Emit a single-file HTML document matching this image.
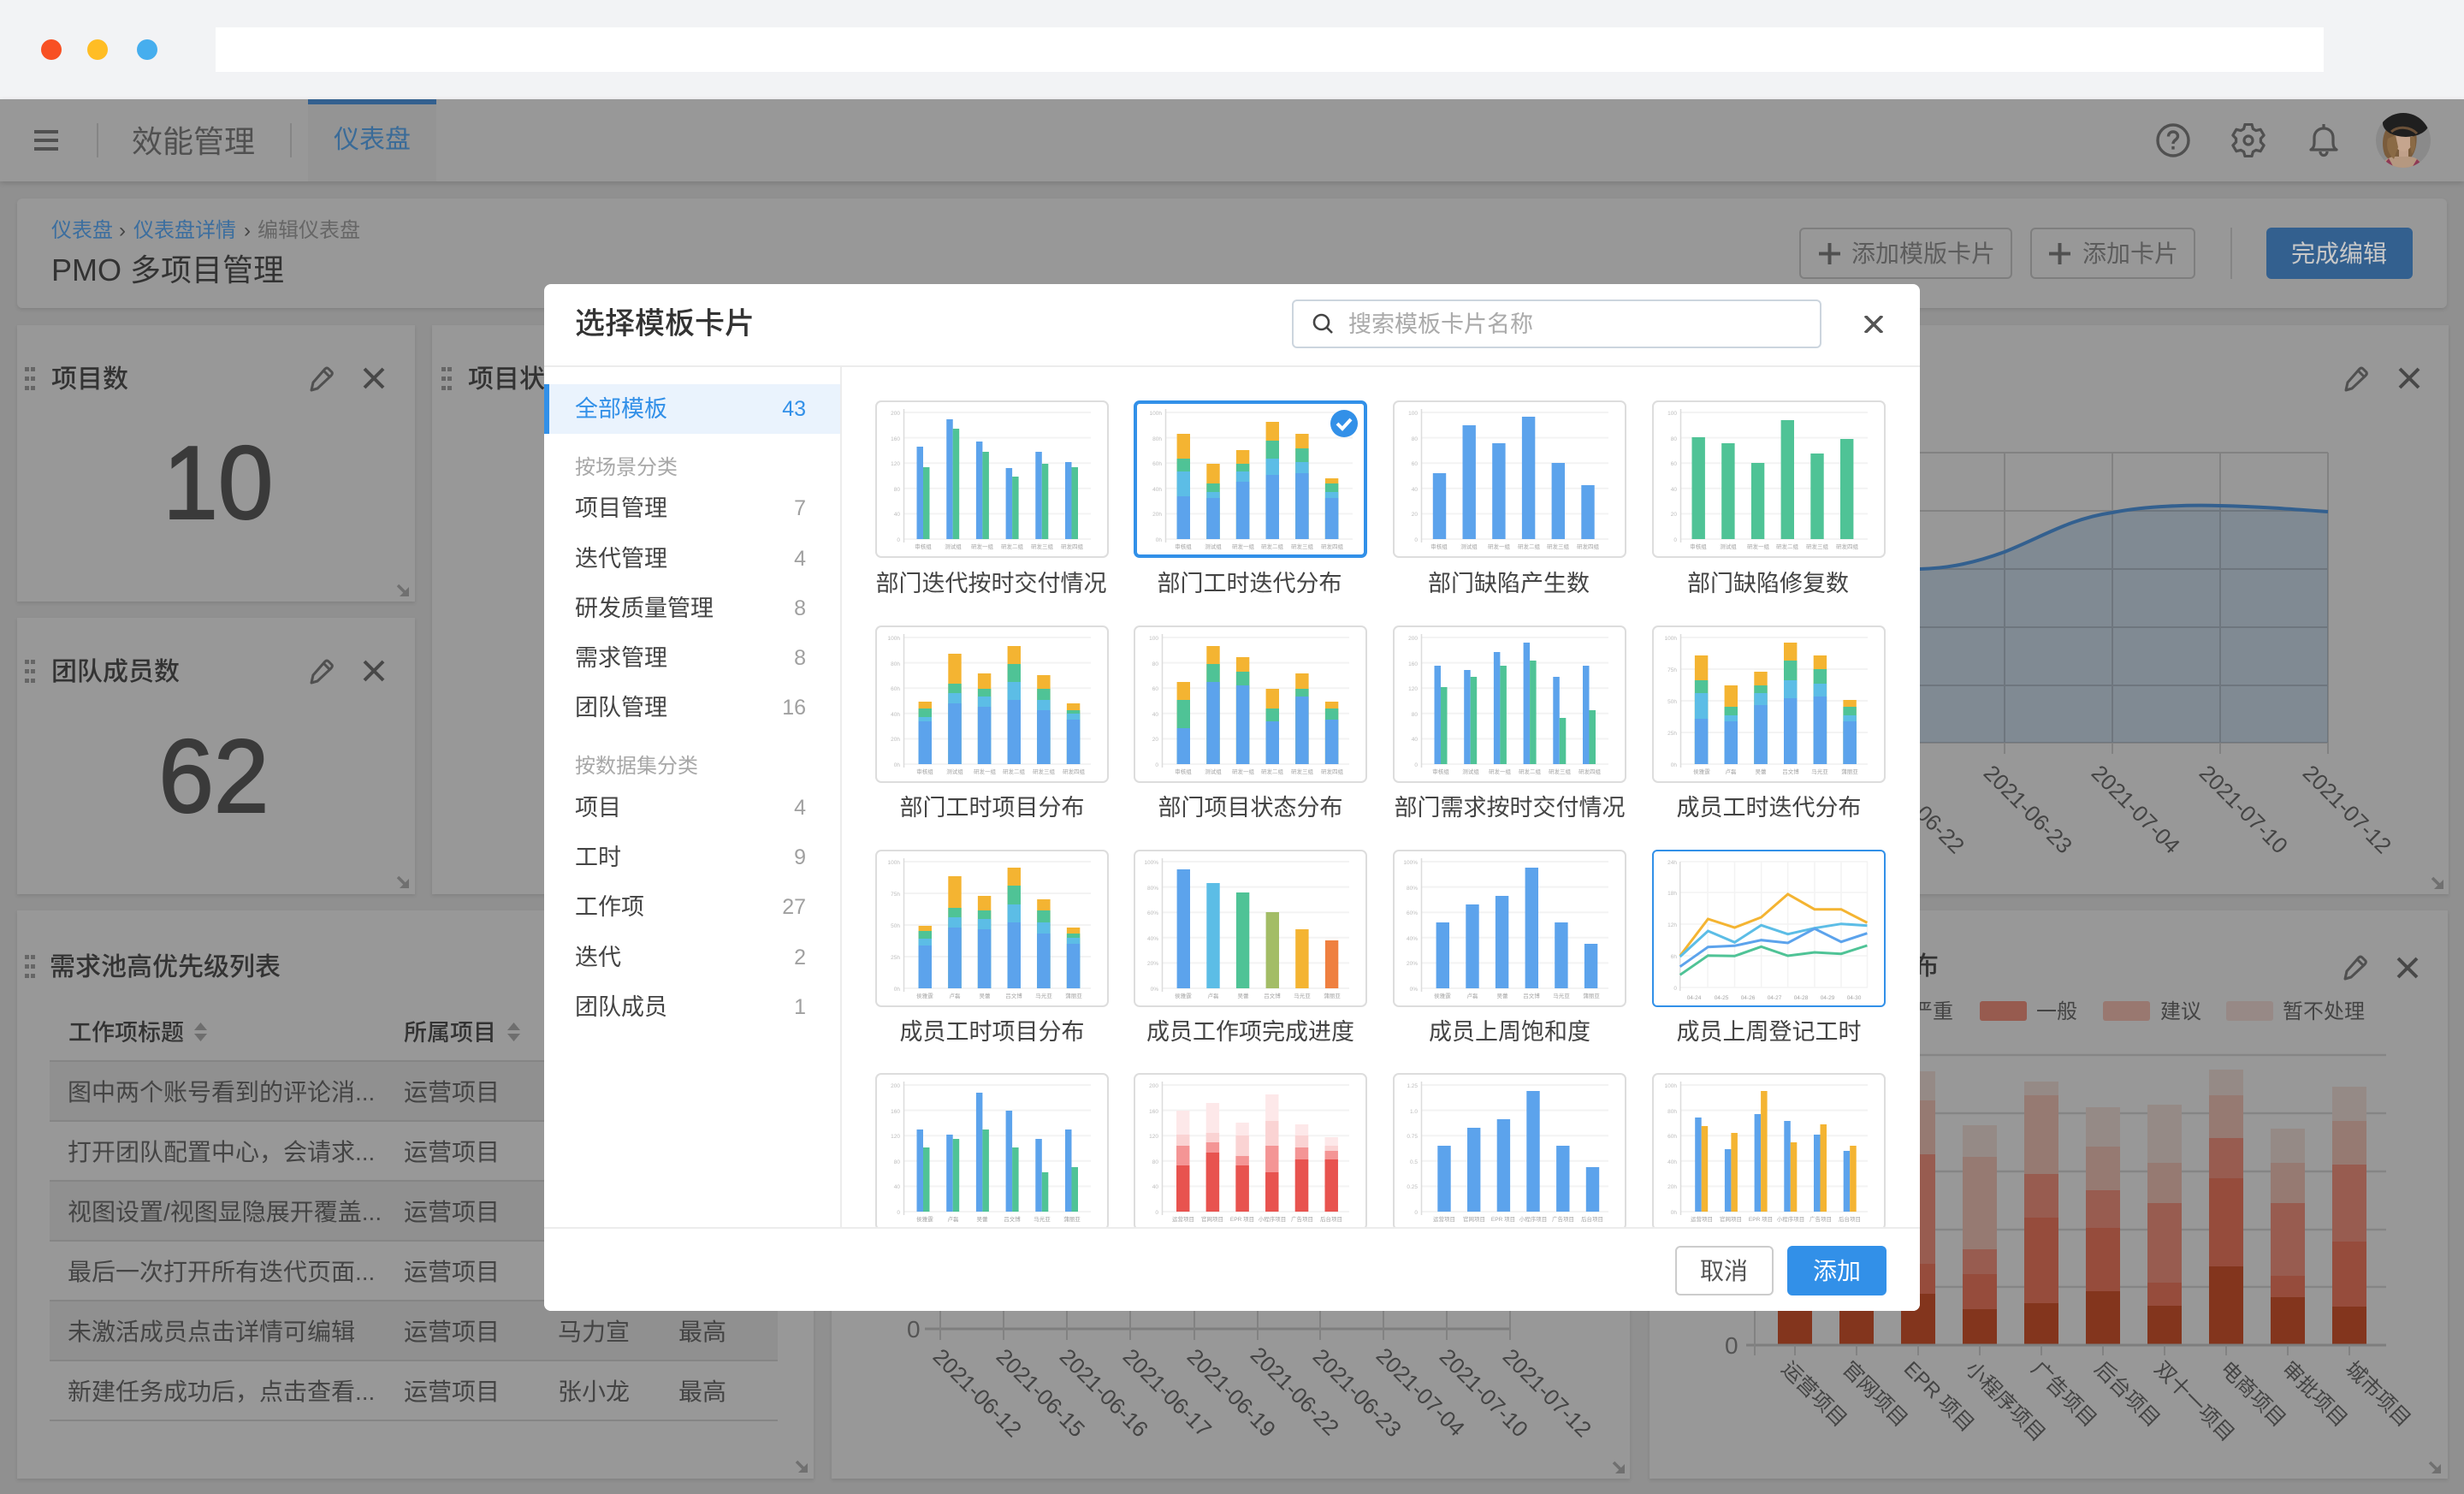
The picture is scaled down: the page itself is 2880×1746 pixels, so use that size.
<!DOCTYPE html>
<html lang="zh-CN">
<head>
<meta charset="utf-8">
<title>选择模板卡片</title>
<style>
html,body{margin:0;padding:0}
body{position:relative;width:2880px;height:1746px;overflow:hidden;background:#909090;font-family:"Liberation Sans","Noto Sans CJK SC",sans-serif}
.a{position:absolute}
.t{position:absolute;white-space:nowrap;line-height:1}
.card{position:absolute;background:#989898;box-shadow:0 2px 4px rgba(0,0,0,.1)}
.row{position:absolute;left:58px;width:851px;height:68px;border-bottom:2px solid #858585}
.tt{font-size:30px;color:#333;font-weight:500}
.td{font-size:28px;color:#444}
.th{font-size:27px;color:#333;font-weight:500}
.si{font-size:27px;color:#444;left:672px}
.sh{font-size:24px;color:#a8a8a8;left:672px}
.sc{font-size:25px;color:#a0a0a0;right:1938px}
.lb{font-size:27px;color:#444;text-align:center}
svg{display:block}
.c{position:absolute}
.c path{fill:none}
.s{stroke-width:15.4}
.p{stroke-width:7.5}
.o{stroke:#f4b430}.g{stroke:#4fc396}.l{stroke:#5bbde6}.b{stroke:#5ca3ec}
.xl text{font-size:6.5px;fill:#a4a4a4;text-anchor:middle}
.yl text{font-size:6.5px;fill:#bcbcbc;text-anchor:end}
.gl path{stroke:#f3f3f3;stroke-width:2}
.ax path{stroke:#dcdcdc;stroke-width:1.5}
</style>
</head>
<body>

<!-- browser chrome -->
<div class="a" style="left:0;top:0;width:2880px;height:116px;background:#f2f3f5"></div>
<div class="a" style="left:48px;top:46px;width:24px;height:24px;border-radius:50%;background:#f85023"></div>
<div class="a" style="left:102px;top:46px;width:24px;height:24px;border-radius:50%;background:#ffbd24"></div>
<div class="a" style="left:160px;top:46px;width:24px;height:24px;border-radius:50%;background:#46aeee"></div>
<div class="a" style="left:252px;top:32px;width:2464px;height:52px;background:#fff"></div>

<!-- top nav -->
<div class="a" style="left:0;top:116px;width:2880px;height:96px;background:#989898;box-shadow:0 2px 6px rgba(0,0,0,.15)"></div>
<div class="a" style="left:360px;top:116px;width:150px;height:96px;background:#949494"></div>
<div class="a" style="left:360px;top:116px;width:150px;height:6px;background:#33608f"></div>
<div class="a" style="left:40px;top:152px;width:28px;height:4px;background:#505050"></div>
<div class="a" style="left:40px;top:162px;width:28px;height:4px;background:#505050"></div>
<div class="a" style="left:40px;top:172px;width:28px;height:4px;background:#505050"></div>
<div class="a" style="left:113px;top:144px;width:2px;height:40px;background:#858585"></div>
<div class="a" style="left:339px;top:144px;width:2px;height:40px;background:#858585"></div>
<div class="t" style="left:154px;top:148px;font-size:36px;color:#505050">效能管理</div>
<div class="t" style="left:390px;top:149px;font-size:30px;color:#3a6b98">仪表盘</div>

<svg class="a" style="left:2520px;top:144px" width="40" height="40" viewBox="0 0 40 40" fill="none" stroke="#505050" stroke-width="3.4"><circle cx="20" cy="20" r="18"/><path d="M14.5 15.5c0-3.500 2.500-5.500 5.500-5.500s5.500 2 5.500 5c0 4.500-5.500 4.500-5.500 9"/><path d="M20 27v3.600"/></svg>
<svg class="a" style="left:2608px;top:144px" width="40" height="40" viewBox="0 0 40 40" fill="none" stroke="#505050" stroke-width="3.2" stroke-linejoin="round"><path d="M14.600 6.600L16 1.400H24L25.400 6.600L28.900 8.600L34.100 7.300L38.100 14.100L34.400 18V22L38.100 25.900L34.100 32.700L28.900 31.400L25.400 33.400L24 38.600H16L14.600 33.400L11.100 31.400L5.900 32.700L1.900 25.900L5.600 22V18L1.900 14.100L5.900 7.300L11.100 8.600Z"/><circle cx="20" cy="20" r="5"/></svg>
<svg class="a" style="left:2699px;top:144px" width="34" height="40" viewBox="0 0 34 40" fill="none" stroke="#505050" stroke-width="3.200" stroke-linejoin="round"><path d="M17 1v5"/><path d="M2 31c3-2 4-4 4-9v-5C6 10 11 6 17 6s11 4 11 11v5c0 5 1 7 4 9z"/><path d="M13 33c0 6 8 6 8 0"/></svg>
<svg class="a" style="left:2777px;top:132px" width="64" height="64" viewBox="0 0 64 64"><defs><clipPath id="av"><circle cx="32" cy="32" r="32"/></clipPath></defs><g clip-path="url(#av)"><rect width="64" height="64" fill="#8a8a8a"/><path d="M16 14C8 22 6 36 10 48c2 5 7 7 11 7l20-3c5-6 8-16 6-30z" fill="#7a5c3c"/><rect x="27" y="42" width="11" height="14" fill="#c0a08a"/><path d="M6 64c2-10 12-14 20-13h12c8 0 14 4 18 13z" fill="#b59880"/><path d="M6 64l9-11 6 11zM58 64l-10-10-6 10z" fill="#8e3a55"/><ellipse cx="32" cy="31" rx="11" ry="14" fill="#c5a58e"/><path d="M14 30c-2 8-1 16 7 24l5-14-3-14zM45 28c2 8 2 14-3 20l-2-10 0-10z" fill="#8a6a45"/><ellipse cx="35" cy="12" rx="27" ry="16" fill="#1f1f1f"/><path d="M18 22c8-7 22-6 30 2" fill="none" stroke="#6a5038" stroke-width="3"/></g></svg>

<!-- breadcrumb panel -->
<div class="card" style="left:20px;top:232px;width:2840px;height:128px;border-radius:6px"></div>
<div class="t" style="left:60px;top:258px;font-size:24px;color:#666"><span style="color:#3b6e9f">仪表盘</span><span style="color:#444;margin:0 9px 0 7px">›</span><span style="color:#3b6e9f">仪表盘详情</span><span style="color:#444;margin:0 8px 0 9px">›</span>编辑仪表盘</div>
<div class="t" style="left:60px;top:298px;font-size:36px;color:#333">PMO 多项目管理</div>

<div class="a" style="left:2103px;top:266px;width:249px;height:60px;box-sizing:border-box;border:2px solid #7e7e7e;border-radius:6px"></div>
<div class="a" style="left:2373px;top:266px;width:193px;height:60px;box-sizing:border-box;border:2px solid #7e7e7e;border-radius:6px"></div>
<svg class="a" style="left:2126px;top:284px" width="25" height="25" viewBox="0 0 25 25"><path d="M12.500 0v25M0 12.500h25" stroke="#505050" stroke-width="4"/></svg>
<svg class="a" style="left:2395px;top:284px" width="25" height="25" viewBox="0 0 25 25"><path d="M12.500 0v25M0 12.500h25" stroke="#505050" stroke-width="4"/></svg>
<div class="t" style="left:2164px;top:283px;font-size:28px;color:#5c5c5c">添加模版卡片</div>
<div class="t" style="left:2434px;top:283px;font-size:28px;color:#5c5c5c">添加卡片</div>
<div class="a" style="left:2607px;top:266px;width:2px;height:60px;background:#858585"></div>
<div class="a" style="left:2649px;top:266px;width:171px;height:60px;background:#33608f;border-radius:6px"></div>
<div class="t" style="left:2678px;top:283px;font-size:28px;color:#c8c8c8">完成编辑</div>

<!-- widgets -->
<div class="card" style="left:20px;top:380px;width:465px;height:323px"></div>
<div class="card" style="left:20px;top:722px;width:465px;height:323px"></div>
<div class="card" style="left:505px;top:380px;width:2357px;height:665px"></div>
<div class="card" style="left:20px;top:1064px;width:931px;height:664px"></div>
<div class="card" style="left:972px;top:1064px;width:933px;height:664px"></div>
<div class="card" style="left:1928px;top:1064px;width:933px;height:664px"></div>

<div class="t tt" style="left:60px;top:429px">项目数</div>
<div class="t tt" style="left:60px;top:771px">团队成员数</div>
<div class="t tt" style="left:547px;top:429px">项目状态分布</div>
<div class="t tt" style="left:58px;top:1116px">需求池高优先级列表</div>
<div class="t tt" style="left:2146px;top:1115px">缺陷分布</div>
<div class="t" style="left:187px;top:503px;font-size:122px;color:#3a3a3a;-webkit-text-stroke:2px #3a3a3a;transform:scaleX(.95)">10</div>
<div class="t" style="left:182px;top:846px;font-size:122px;color:#3a3a3a;-webkit-text-stroke:2px #3a3a3a;transform:scaleX(.95)">62</div>

<!-- table -->
<div class="t th" style="left:80px;top:1194px">工作项标题</div>
<svg class="a" style="left:227px;top:1195px" width="15" height="22" viewBox="0 0 15 22" fill="#6e6e6e"><path d="M0 9 7.500 0 15 9zM0 13h15L7.500 22z"/></svg>
<div class="t th" style="left:472px;top:1194px">所属项目</div>
<svg class="a" style="left:593px;top:1195px" width="15" height="22" viewBox="0 0 15 22" fill="#6e6e6e"><path d="M0 9 7.500 0 15 9zM0 13h15L7.500 22z"/></svg>
<div class="a" style="left:58px;top:1239px;width:851px;height:2px;background:#858585"></div>
<div class="row" style="top:1241px;background:#909090"></div>
<div class="row" style="top:1311px"></div>
<div class="row" style="top:1381px;background:#909090"></div>
<div class="row" style="top:1451px"></div>
<div class="row" style="top:1521px;background:#909090"></div>
<div class="row" style="top:1591px"></div>
<div class="t td" style="left:79px;top:1263px">图中两个账号看到的评论消...</div>
<div class="t td" style="left:79px;top:1333px">打开团队配置中心，会请求...</div>
<div class="t td" style="left:79px;top:1403px">视图设置/视图显隐展开覆盖...</div>
<div class="t td" style="left:79px;top:1473px">最后一次打开所有迭代页面...</div>
<div class="t td" style="left:79px;top:1543px">未激活成员点击详情可编辑</div>
<div class="t td" style="left:79px;top:1613px">新建任务成功后，点击查看...</div>
<div class="t td" style="left:472px;top:1263px">运营项目</div>
<div class="t td" style="left:472px;top:1333px">运营项目</div>
<div class="t td" style="left:472px;top:1403px">运营项目</div>
<div class="t td" style="left:472px;top:1473px">运营项目</div>
<div class="t td" style="left:472px;top:1543px">运营项目</div>
<div class="t td" style="left:472px;top:1613px">运营项目</div>
<div class="t td" style="left:652px;top:1543px">马力宣</div>
<div class="t td" style="left:652px;top:1613px">张小龙</div>
<div class="t td" style="left:793px;top:1543px">最高</div>
<div class="t td" style="left:793px;top:1613px">最高</div>

<!-- legend -->
<div class="t" style="left:2235px;top:1171px;font-size:24px;color:#444">严重</div>
<div class="a" style="left:2314px;top:1170px;width:55px;height:23px;background:#975b4f;border-radius:3px"></div>
<div class="t" style="left:2380px;top:1171px;font-size:24px;color:#444">一般</div>
<div class="a" style="left:2458px;top:1170px;width:55px;height:23px;background:#997870;border-radius:3px"></div>
<div class="t" style="left:2525px;top:1171px;font-size:24px;color:#444">建议</div>
<div class="a" style="left:2602px;top:1170px;width:55px;height:23px;background:#978986;border-radius:3px"></div>
<div class="t" style="left:2668px;top:1171px;font-size:24px;color:#444">暂不处理</div>

<!-- background chart layer -->
<svg class="a" style="left:0;top:0" width="2880" height="1746" viewBox="0 0 2880 1746" fill="none">
<defs>
<g id="ph"><path d="M-12 14l2-9L4-11q2-2 4 0l4 4q1 2-1 4L-5 12z" fill="none" stroke="#505050" stroke-width="3" stroke-linejoin="round"/><path d="M2-9l7 7" stroke="#505050" stroke-width="3"/></g>
<path id="xx" d="M-11-11L11 11M11-11L-11 11" stroke="#484848" stroke-width="4"/>
<g id="hd" fill="#666"><rect width="5" height="5"/><rect x="7" width="5" height="5"/><rect y="11" width="5" height="5"/><rect x="7" y="11" width="5" height="5"/><rect y="22" width="5" height="5"/><rect x="7" y="22" width="5" height="5"/></g>
<g id="rs"><path d="M1 1L11 11" stroke="#707070" stroke-width="3.500"/><path d="M14 3V14H3z" fill="#707070"/></g>
</defs>
<use href="#hd" x="29" y="429"/><use href="#hd" x="29" y="771"/><use href="#hd" x="516" y="429"/><use href="#hd" x="29" y="1116"/>
<use href="#ph" x="376" y="442"/><use href="#xx" x="437" y="442"/>
<use href="#ph" x="376" y="784"/><use href="#xx" x="437" y="784"/>
<use href="#ph" x="2754" y="442"/><use href="#xx" x="2816" y="442"/>
<use href="#ph" x="2753" y="1130"/><use href="#xx" x="2814" y="1131"/>
<use href="#rs" x="464" y="683"/><use href="#rs" x="464" y="1024"/><use href="#rs" x="2842" y="1025"/><use href="#rs" x="930" y="1707"/><use href="#rs" x="1885" y="1708"/><use href="#rs" x="2839" y="1708"/>

<!-- area chart -->
<path d="M2200 668C2220 667 2235 666 2244 665C2280 664 2310 657 2343 645C2390 626 2420 606 2469 599C2510 591 2560 590 2595 591C2640 592 2680 595 2721 598V868H2200Z" fill="#808a93"/>
<path d="M2200 529H2721M2200 597H2721M2200 665H2721M2200 733H2721M2200 801H2721M2200 868H2721M2343 529V881M2469 529V881M2595 529V881M2721 529V881" stroke="rgba(0,0,0,.14)" stroke-width="2"/>
<path d="M2244 665C2280 664 2310 657 2343 645C2390 626 2420 606 2469 599C2510 591 2560 590 2595 591C2640 592 2680 595 2721 598" stroke="#33608f" stroke-width="4"/>
<g font-size="26" fill="#444">
<text transform="translate(2191 905) rotate(45)">2021-06-22</text>
<text transform="translate(2317 905) rotate(45)">2021-06-23</text>
<text transform="translate(2443 905) rotate(45)">2021-07-04</text>
<text transform="translate(2569 905) rotate(45)">2021-07-10</text>
<text transform="translate(2690 905) rotate(45)">2021-07-12</text>
</g>

<!-- line chart bottom middle -->
<path d="M1081 1553H1765" stroke="#7e7e7e" stroke-width="3"/>
<path d="M1099 1440V1566M1173 1440V1566M1247 1440V1566M1321 1440V1566M1396 1440V1566M1470 1440V1566M1543 1440V1566M1617 1440V1566M1691 1440V1566M1765 1440V1566" stroke="#828282" stroke-width="2"/>
<text x="1060" y="1563" font-size="28" fill="#555">0</text>
<g font-size="26" fill="#444">
<text transform="translate(1089 1587) rotate(45)">2021-06-12</text>
<text transform="translate(1163 1587) rotate(45)">2021-06-15</text>
<text transform="translate(1237 1587) rotate(45)">2021-06-16</text>
<text transform="translate(1311 1587) rotate(45)">2021-06-17</text>
<text transform="translate(1386 1587) rotate(45)">2021-06-19</text>
<text transform="translate(1460 1585) rotate(45)">2021-06-22</text>
<text transform="translate(1533 1587) rotate(45)">2021-06-23</text>
<text transform="translate(1607 1586) rotate(45)">2021-07-04</text>
<text transform="translate(1681 1587) rotate(45)">2021-07-10</text>
<text transform="translate(1755 1587) rotate(45)">2021-07-12</text>
</g>

<!-- stacked chart -->
<path d="M2041 1233H2789M2041 1301H2789M2041 1369H2789M2041 1437H2789M2041 1504H2789" stroke="#858585" stroke-width="2.500"/>
<g stroke-width="40">
<path stroke="#958a86" d="M2242 1572V1252M2314 1572V1315M2386 1572V1264M2458 1572V1294M2530 1572V1291M2602 1572V1250M2674 1572V1319M2746 1572V1270"/>
<path stroke="#967a72" d="M2242 1572V1286M2314 1572V1352M2386 1572V1280M2458 1572V1340M2530 1572V1359M2602 1572V1280M2674 1572V1359M2746 1572V1310"/>
<path stroke="#985c50" d="M2242 1572V1349M2314 1572V1460M2386 1572V1372M2458 1572V1391M2530 1572V1406M2602 1572V1330M2674 1572V1406M2746 1572V1361"/>
<path stroke="#964c3c" d="M2242 1572V1477M2314 1572V1489M2386 1572V1423M2458 1572V1435M2530 1572V1499M2602 1572V1377M2674 1572V1491M2746 1572V1451"/>
<path stroke="#83351d" d="M2098 1572V1500M2170 1572V1500M2242 1572V1512M2314 1572V1530M2386 1572V1523M2458 1572V1509M2530 1572V1526M2602 1572V1480M2674 1572V1516M2746 1572V1527"/>
</g>
<path d="M2041 1572H2789" stroke="#7e7e7e" stroke-width="3"/>
<path d="M2051 1440V1584M2098 1572V1584M2170 1572V1584M2242 1572V1584M2314 1572V1584M2386 1572V1584M2458 1572V1584M2530 1572V1584M2602 1572V1584M2674 1572V1584M2746 1572V1584" stroke="#828282" stroke-width="2"/>
<text x="2016" y="1582" font-size="28" fill="#555">0</text>
<g font-size="24" fill="#444">
<text transform="translate(2081 1601) rotate(45)">运营项目</text>
<text transform="translate(2152 1601) rotate(45)">官网项目</text>
<text transform="translate(2224 1601) rotate(45)">EPR 项目</text>
<text transform="translate(2296 1601) rotate(45)">小程序项目</text>
<text transform="translate(2373 1601) rotate(45)">广告项目</text>
<text transform="translate(2447 1601) rotate(45)">后台项目</text>
<text transform="translate(2517 1601) rotate(45)">双十一项目</text>
<text transform="translate(2594 1601) rotate(45)">电商项目</text>
<text transform="translate(2666 1601) rotate(45)">审批项目</text>
<text transform="translate(2740 1601) rotate(45)">城市项目</text>
</g>
</svg>

<!-- MODAL -->
<div class="a" style="left:636px;top:332px;width:1608px;height:1200px;background:#fff;border-radius:8px"></div>
<div class="t" style="left:672px;top:361px;font-size:35px;color:#333;font-weight:500">选择模板卡片</div>
<div class="a" style="left:636px;top:427px;width:1608px;height:2px;background:#ececec"></div>
<div class="a" style="left:1510px;top:350px;width:619px;height:57px;box-sizing:border-box;border:2px solid #ccd5de;border-radius:6px;background:#fff"></div>
<svg class="a" style="left:1533px;top:365px" width="26" height="26" viewBox="0 0 26 26" fill="none" stroke="#444" stroke-width="2.600"><circle cx="11.500" cy="11.500" r="8.500"/><path d="M17.500 17.500L24 24"/></svg>
<div class="t" style="left:1576px;top:366px;font-size:27px;color:#aaa">搜索模板卡片名称</div>
<svg class="a" style="left:2179px;top:369px" width="22" height="20" viewBox="0 0 22 20"><path d="M1 0L21 20M21 0L1 20" stroke="#555" stroke-width="3.600"/></svg>

<!-- sidebar -->
<div class="a" style="left:982px;top:429px;width:2px;height:1006px;background:#ececec"></div>
<div class="a" style="left:636px;top:449px;width:346px;height:58px;background:#eaf3fd"></div>
<div class="a" style="left:636px;top:449px;width:6px;height:58px;background:#3290e8"></div>
<div class="t" style="left:672px;top:465px;font-size:27px;color:#3290e8">全部模板</div>
<div class="t" style="right:1938px;top:466px;font-size:25px;color:#3290e8">43</div>
<div class="t sh" style="top:535px">按场景分类</div>
<div class="t si" style="top:581px">项目管理</div><div class="t sc" style="top:582px">7</div>
<div class="t si" style="top:640px">迭代管理</div><div class="t sc" style="top:641px">4</div>
<div class="t si" style="top:698px">研发质量管理</div><div class="t sc" style="top:699px">8</div>
<div class="t si" style="top:756px">需求管理</div><div class="t sc" style="top:757px">8</div>
<div class="t si" style="top:814px">团队管理</div><div class="t sc" style="top:815px">16</div>
<div class="t sh" style="top:884px">按数据集分类</div>
<div class="t si" style="top:931px">项目</div><div class="t sc" style="top:932px">4</div>
<div class="t si" style="top:989px">工时</div><div class="t sc" style="top:990px">9</div>
<div class="t si" style="top:1047px">工作项</div><div class="t sc" style="top:1048px">27</div>
<div class="t si" style="top:1106px">迭代</div><div class="t sc" style="top:1107px">2</div>
<div class="t si" style="top:1164px">团队成员</div><div class="t sc" style="top:1165px">1</div>

<!-- shared chart defs -->
<svg width="0" height="0" style="position:absolute">
<defs>
<filter id="bl" x="-5%" y="-5%" width="110%" height="110%"><feGaussianBlur stdDeviation=".35"/></filter>
<g id="g5"><g class="gl"><path d="M34 14H252M34 43.600H252M34 73.200H252M34 102.800H252M34 132.400H252M34 162H252"/></g><g class="ax"><path d="M33.500 10V166"/></g></g>
<g id="g4"><g class="gl"><path d="M34 14H252M34 51H252M34 88H252M34 125H252M34 162H252"/></g><g class="ax"><path d="M33.500 10V166"/></g></g>
</defs>
</svg>

<!-- Row 1 -->
<svg class="c" style="left:1023px;top:468px" width="273" height="184" viewBox="0 0 273 184"><rect x="1" y="1" width="271" height="182" rx="6" fill="#fff" stroke="#ddd" stroke-width="2"/><g filter="url(#bl)"><use href="#g5"/>
<path class="b p" d="M52.250 162V54M87 162V22M121.650 162V48M156.350 162V79M191.050 162V60M225.750 162V72"/><path class="g p" d="M59.750 162V78M94.450 162V33M129.150 162V60M163.850 162V89M198.550 162V74M233.250 162V78"/>
<g class="yl"><text x="29" y="17">200</text><text x="29" y="47">160</text><text x="29" y="76">120</text><text x="29" y="106">80</text><text x="29" y="135">40</text><text x="29" y="165">0</text></g>
<g class="xl"><text x="56" y="173">审核组</text><text x="91" y="173">测试组</text><text x="125" y="173">研发一组</text><text x="160" y="173">研发二组</text><text x="195" y="173">研发三组</text><text x="230" y="173">研发四组</text></g></g></svg>

<svg class="c" style="left:1325px;top:468px" width="273" height="184" viewBox="0 0 273 184"><rect x="2" y="2" width="269" height="180" rx="5" fill="#fff" stroke="#3290e8" stroke-width="4"/><g filter="url(#bl)"><use href="#g5" x="4"/>
<path class="o s" d="M58.300 162V39M93 162V74M127.600 162V58M162.300 162V25M196.900 162V39M231.600 162V91"/><path class="g s" d="M58.300 162V68M93 162V97M127.600 162V74M162.300 162V47M196.900 162V56M231.600 162V97"/><path class="l s" d="M58.300 162V83M93 162V107M127.600 162V83M162.300 162V68M196.900 162V72M231.600 162V107"/><path class="b s" d="M58.300 162V112M93 162V114M127.600 162V95M162.300 162V87M196.900 162V85M231.600 162V114"/>
<g class="yl"><text x="33" y="17">100h</text><text x="33" y="47">80h</text><text x="33" y="76">60h</text><text x="33" y="106">40h</text><text x="33" y="135">20h</text><text x="33" y="165">0h</text></g>
<g class="xl"><text x="58" y="173">审核组</text><text x="93" y="173">测试组</text><text x="128" y="173">研发一组</text><text x="162" y="173">研发二组</text><text x="197" y="173">研发三组</text><text x="232" y="173">研发四组</text></g></g><circle cx="246" cy="27" r="16" fill="#3290e8"/><path d="M238 27l6 6 10-11" fill="none" stroke="#fff" stroke-width="4"/></svg>

<svg class="c" style="left:1628px;top:468px" width="273" height="184" viewBox="0 0 273 184"><rect x="1" y="1" width="271" height="182" rx="6" fill="#fff" stroke="#ddd" stroke-width="2"/><g filter="url(#bl)"><use href="#g5"/>
<path class="b s" d="M54.500 162V85M89.200 162V29M123.900 162V50M158.600 162V19M193.300 162V73M228 162V99"/>
<g class="yl"><text x="29" y="17">100</text><text x="29" y="47">80</text><text x="29" y="76">60</text><text x="29" y="106">40</text><text x="29" y="135">20</text><text x="29" y="165">0</text></g>
<g class="xl"><text x="54" y="173">审核组</text><text x="89" y="173">测试组</text><text x="124" y="173">研发一组</text><text x="159" y="173">研发二组</text><text x="193" y="173">研发三组</text><text x="228" y="173">研发四组</text></g></g></svg>

<svg class="c" style="left:1931px;top:468px" width="273" height="184" viewBox="0 0 273 184"><rect x="1" y="1" width="271" height="182" rx="6" fill="#fff" stroke="#ddd" stroke-width="2"/><g filter="url(#bl)"><use href="#g5"/>
<path class="g s" d="M54.200 162V43M88.900 162V50M123.600 162V73M158.300 162V23M193 162V62M227.700 162V45"/>
<g class="yl"><text x="29" y="17">100</text><text x="29" y="47">80</text><text x="29" y="76">60</text><text x="29" y="106">40</text><text x="29" y="135">20</text><text x="29" y="165">0</text></g>
<g class="xl"><text x="54" y="173">审核组</text><text x="89" y="173">测试组</text><text x="124" y="173">研发一组</text><text x="158" y="173">研发二组</text><text x="193" y="173">研发三组</text><text x="228" y="173">研发四组</text></g></g></svg>

<div class="t lb" style="left:1002px;width:313px;top:669px">部门迭代按时交付情况</div>
<div class="t lb" style="left:1304px;width:313px;top:669px">部门工时迭代分布</div>
<div class="t lb" style="left:1607px;width:313px;top:669px">部门缺陷产生数</div>
<div class="t lb" style="left:1910px;width:313px;top:669px">部门缺陷修复数</div>

<!-- Row 2 -->
<svg class="c" style="left:1023px;top:731px" width="273" height="184" viewBox="0 0 273 184"><rect x="1" y="1" width="271" height="182" rx="6" fill="#fff" stroke="#ddd" stroke-width="2"/><g filter="url(#bl)"><use href="#g5"/>
<path class="o s" d="M58.300 162V89M93 162V33M127.600 162V56M162.300 162V24M196.900 162V58M231.600 162V91"/><path class="g s" d="M58.300 162V97M93 162V68M127.600 162V74M162.300 162V45M196.900 162V74M231.600 162V99"/><path class="l s" d="M58.300 162V107M93 162V79M127.600 162V83M162.300 162V66M196.900 162V87M231.600 162V103"/><path class="b s" d="M58.300 162V112M93 162V91M127.600 162V95M162.300 162V87M196.900 162V99M231.600 162V110"/>
<g class="yl"><text x="29" y="17">100h</text><text x="29" y="47">80h</text><text x="29" y="76">60h</text><text x="29" y="106">40h</text><text x="29" y="135">20h</text><text x="29" y="165">0h</text></g>
<g class="xl"><text x="58" y="173">审核组</text><text x="93" y="173">测试组</text><text x="128" y="173">研发一组</text><text x="162" y="173">研发二组</text><text x="197" y="173">研发三组</text><text x="232" y="173">研发四组</text></g></g></svg>

<svg class="c" style="left:1325px;top:731px" width="273" height="184" viewBox="0 0 273 184"><rect x="1" y="1" width="271" height="182" rx="6" fill="#fff" stroke="#ddd" stroke-width="2"/><g filter="url(#bl)"><use href="#g5"/>
<path class="o s" d="M58.300 162V66M93 162V24M127.600 162V37M162.300 162V74M196.900 162V56M231.600 162V89"/><path class="g s" d="M58.300 162V87M93 162V45M127.600 162V54M162.300 162V97M196.900 162V74M231.600 162V97"/><path class="b s" d="M58.300 162V120M93 162V66M127.600 162V70M162.300 162V112M196.900 162V83M231.600 162V110"/>
<g class="yl"><text x="29" y="17">100</text><text x="29" y="47">80</text><text x="29" y="76">60</text><text x="29" y="106">40</text><text x="29" y="135">20</text><text x="29" y="165">0</text></g>
<g class="xl"><text x="58" y="173">审核组</text><text x="93" y="173">测试组</text><text x="128" y="173">研发一组</text><text x="162" y="173">研发二组</text><text x="197" y="173">研发三组</text><text x="232" y="173">研发四组</text></g></g></svg>

<svg class="c" style="left:1628px;top:731px" width="273" height="184" viewBox="0 0 273 184"><rect x="1" y="1" width="271" height="182" rx="6" fill="#fff" stroke="#ddd" stroke-width="2"/><g filter="url(#bl)"><use href="#g5"/>
<path class="b p" d="M52.250 162V47M86.950 162V52M121.650 162V31M156.350 162V20M191.050 162V60M225.750 162V47"/><path class="g p" d="M59.750 162V72M94.450 162V60M129.150 162V47M163.850 162V41M198.550 162V108M233.250 162V99"/>
<g class="yl"><text x="29" y="17">200</text><text x="29" y="47">160</text><text x="29" y="76">120</text><text x="29" y="106">80</text><text x="29" y="135">40</text><text x="29" y="165">0</text></g>
<g class="xl"><text x="56" y="173">审核组</text><text x="91" y="173">测试组</text><text x="125" y="173">研发一组</text><text x="160" y="173">研发二组</text><text x="195" y="173">研发三组</text><text x="230" y="173">研发四组</text></g></g></svg>

<svg class="c" style="left:1931px;top:731px" width="273" height="184" viewBox="0 0 273 184"><rect x="1" y="1" width="271" height="182" rx="6" fill="#fff" stroke="#ddd" stroke-width="2"/><g filter="url(#bl)"><use href="#g4"/>
<path class="o s" d="M57.600 162V35M92.300 162V70M127 162V54M161.700 162V20M196.400 162V35M231.100 162V87"/><path class="g s" d="M57.600 162V64M92.300 162V95M127 162V70M161.700 162V41M196.400 162V51M231.100 162V95"/><path class="l s" d="M57.600 162V79M92.300 162V105M127 162V79M161.700 162V64M196.400 162V68M231.100 162V105"/><path class="b s" d="M57.600 162V109M92.300 162V112M127 162V93M161.700 162V85M196.400 162V83M231.100 162V112"/>
<g class="yl"><text x="29" y="17">100h</text><text x="29" y="54">75h</text><text x="29" y="91">50h</text><text x="29" y="128">25h</text><text x="29" y="165">0h</text></g>
<g class="xl"><text x="58" y="173">侯雅霆</text><text x="92" y="173">卢磊</text><text x="127" y="173">吴蕾</text><text x="162" y="173">吕文博</text><text x="196" y="173">马光亚</text><text x="231" y="173">蒲丽亚</text></g></g></svg>

<div class="t lb" style="left:1003px;width:313px;top:931px">部门工时项目分布</div>
<div class="t lb" style="left:1305px;width:313px;top:931px">部门项目状态分布</div>
<div class="t lb" style="left:1608px;width:313px;top:931px">部门需求按时交付情况</div>
<div class="t lb" style="left:1911px;width:313px;top:931px">成员工时迭代分布</div>

<!-- Row 3 -->
<svg class="c" style="left:1023px;top:993px" width="273" height="184" viewBox="0 0 273 184"><rect x="1" y="1" width="271" height="182" rx="6" fill="#fff" stroke="#ddd" stroke-width="2"/><g filter="url(#bl)"><use href="#g4"/>
<path class="o s" d="M58.300 162V89M93 162V31M127.600 162V54M162.300 162V21M196.900 162V58M231.600 162V91"/><path class="g s" d="M58.300 162V95M93 162V68M127.600 162V71M162.300 162V42M196.900 162V71M231.600 162V98"/><path class="l s" d="M58.300 162V104M93 162V79M127.600 162V81M162.300 162V64M196.900 162V85M231.600 162V103"/><path class="b s" d="M58.300 162V112M93 162V91M127.600 162V93M162.300 162V85M196.900 162V98M231.600 162V110"/>
<g class="yl"><text x="29" y="17">100h</text><text x="29" y="54">75h</text><text x="29" y="91">50h</text><text x="29" y="128">25h</text><text x="29" y="165">0h</text></g>
<g class="xl"><text x="58" y="173">侯雅霆</text><text x="93" y="173">卢磊</text><text x="128" y="173">吴蕾</text><text x="162" y="173">吕文博</text><text x="197" y="173">马光亚</text><text x="232" y="173">蒲丽亚</text></g></g></svg>

<svg class="c" style="left:1325px;top:993px" width="273" height="184" viewBox="0 0 273 184"><rect x="1" y="1" width="271" height="182" rx="6" fill="#fff" stroke="#ddd" stroke-width="2"/><g filter="url(#bl)"><use href="#g5"/>
<path class="b s" d="M58.300 162V23"/><path class="l s" d="M93 162V39"/><path class="g s" d="M127.600 162V50"/><path class="s" stroke="#a3bd66" d="M162.300 162V73"/><path class="o s" d="M196.900 162V93"/><path class="s" stroke="#ef8040" d="M231.600 162V106"/>
<g class="yl"><text x="29" y="17">100%</text><text x="29" y="47">80%</text><text x="29" y="76">60%</text><text x="29" y="106">40%</text><text x="29" y="135">20%</text><text x="29" y="165">0%</text></g>
<g class="xl"><text x="58" y="173">侯雅霆</text><text x="93" y="173">卢磊</text><text x="128" y="173">吴蕾</text><text x="162" y="173">吕文博</text><text x="197" y="173">马光亚</text><text x="232" y="173">蒲丽亚</text></g></g></svg>

<svg class="c" style="left:1628px;top:993px" width="273" height="184" viewBox="0 0 273 184"><rect x="1" y="1" width="271" height="182" rx="6" fill="#fff" stroke="#ddd" stroke-width="2"/><g filter="url(#bl)"><use href="#g5"/>
<path class="b s" d="M58.300 162V85M93 162V64M127.600 162V54M162.300 162V21M196.900 162V85M231.600 162V110"/>
<g class="yl"><text x="29" y="17">100%</text><text x="29" y="47">80%</text><text x="29" y="76">60%</text><text x="29" y="106">40%</text><text x="29" y="135">20%</text><text x="29" y="165">0%</text></g>
<g class="xl"><text x="58" y="173">侯雅霆</text><text x="93" y="173">卢磊</text><text x="128" y="173">吴蕾</text><text x="162" y="173">吕文博</text><text x="197" y="173">马光亚</text><text x="232" y="173">蒲丽亚</text></g></g></svg>

<svg class="c" style="left:1931px;top:993px" width="273" height="184" viewBox="0 0 273 184"><rect x="1" y="1" width="271" height="182" rx="5" fill="#fff" stroke="#3290e8" stroke-width="2"/><g filter="url(#bl)"><g class="gl"><path d="M33 14H252M33 50H252M33 87H252M33 124H252M33 161H252M65 14V161M96.500 14V161M127.600 14V161M158.700 14V161M190 14V161M221 14V161M251.500 14V161" style="stroke-width:1.500"/></g><g class="ax"><path d="M32.700 14V165"/></g>
<path d="M32.700 124L65.400 81L96.500 91L127.600 79L158.700 52L189.900 69.700L221 69.700L251.400 85.300" stroke="#f4b430" stroke-width="3"/>
<path d="M32.700 125L65.400 95L96.500 108.300L127.600 88.300L158.700 98.700L189.900 91.700L221 86.700L251.400 88.700" stroke="#5bbde6" stroke-width="3"/>
<path d="M32.700 136.700L65.400 113.700L96.500 112.300L127.600 105.700L158.700 109L189.900 92.300L221 107.700L251.400 97.700" stroke="#5ca3ec" stroke-width="3"/>
<path d="M32.700 146.300L65.400 123.700L96.500 124.300L127.600 113.300L158.700 124L189.900 120L221 121.700L251.400 112" stroke="#4fc396" stroke-width="3"/>
<g class="yl"><text x="29" y="17">24h</text><text x="29" y="53">18h</text><text x="29" y="90">12h</text><text x="29" y="127">6h</text><text x="29" y="164">0</text></g>
<g class="xl"><text x="49" y="175">04-24</text><text x="81" y="175">04-25</text><text x="112" y="175">04-26</text><text x="143" y="175">04-27</text><text x="174" y="175">04-28</text><text x="205" y="175">04-29</text><text x="236" y="175">04-30</text></g></g></svg>

<div class="t lb" style="left:1003px;width:313px;top:1193px">成员工时项目分布</div>
<div class="t lb" style="left:1305px;width:313px;top:1193px">成员工作项完成进度</div>
<div class="t lb" style="left:1608px;width:313px;top:1193px">成员上周饱和度</div>
<div class="t lb" style="left:1911px;width:313px;top:1193px">成员上周登记工时</div>

<!-- Row 4 -->
<svg class="c" style="left:1023px;top:1254px" width="273" height="184" viewBox="0 0 273 184"><rect x="1" y="1" width="271" height="182" rx="6" fill="#fff" stroke="#ddd" stroke-width="2"/><g filter="url(#bl)"><use href="#g5"/>
<path class="b p" d="M52.250 162V66M86.950 162V72M121.650 162V23M156.350 162V44M191.050 162V77M225.750 162V66"/><path class="g p" d="M59.750 162V87M94.450 162V77M129.150 162V66M163.850 162V87M198.550 162V116M233.250 162V110"/>
<g class="yl"><text x="29" y="17">200</text><text x="29" y="47">160</text><text x="29" y="76">120</text><text x="29" y="106">80</text><text x="29" y="135">40</text><text x="29" y="165">0</text></g>
<g class="xl"><text x="58" y="173">侯雅霆</text><text x="91" y="173">卢磊</text><text x="125" y="173">吴蕾</text><text x="160" y="173">吕文博</text><text x="195" y="173">马光亚</text><text x="230" y="173">蒲丽亚</text></g></g></svg>

<svg class="c" style="left:1325px;top:1254px" width="273" height="184" viewBox="0 0 273 184"><rect x="1" y="1" width="271" height="182" rx="6" fill="#fff" stroke="#ddd" stroke-width="2"/><g filter="url(#bl)"><use href="#g5"/>
<path class="s" stroke="#fde8e9" d="M57.700 162V44M92.400 162V35M127.100 162V58M161.800 162V25M196.500 162V60M231.200 162V75"/><path class="s" stroke="#fad3d3" d="M57.700 162V72M92.400 162V70M127.100 162V73M161.800 162V56M196.500 162V73M231.200 162V85"/><path class="s" stroke="#f49595" d="M57.700 162V85M92.400 162V81M127.100 162V97M161.800 162V85M196.500 162V87M231.200 162V91"/><path class="s" stroke="#e85350" d="M57.700 162V108M92.400 162V93M127.100 162V108M161.800 162V116M196.500 162V101M231.200 162V101"/>
<g class="yl"><text x="29" y="17">200</text><text x="29" y="47">160</text><text x="29" y="76">120</text><text x="29" y="106">80</text><text x="29" y="135">40</text><text x="29" y="165">0</text></g>
<g class="xl"><text x="58" y="173">运营项目</text><text x="92" y="173">官网项目</text><text x="127" y="173">EPR 项目</text><text x="162" y="173">小程序项目</text><text x="197" y="173">广告项目</text><text x="231" y="173">后台项目</text></g></g></svg>

<svg class="c" style="left:1628px;top:1254px" width="273" height="184" viewBox="0 0 273 184"><rect x="1" y="1" width="271" height="182" rx="6" fill="#fff" stroke="#ddd" stroke-width="2"/><g filter="url(#bl)"><use href="#g5"/>
<path class="b s" d="M60 162V85M94.700 162V64M129.400 162V54M164 162V21M198.800 162V85M233.500 162V110"/>
<g class="yl"><text x="29" y="17">1.25</text><text x="29" y="47">1.0</text><text x="29" y="76">0.75</text><text x="29" y="106">0.5</text><text x="29" y="135">0.25</text><text x="29" y="165">0</text></g>
<g class="xl"><text x="60" y="173">运营项目</text><text x="95" y="173">官网项目</text><text x="129" y="173">EPR 项目</text><text x="164" y="173">小程序项目</text><text x="199" y="173">广告项目</text><text x="233" y="173">后台项目</text></g></g></svg>

<svg class="c" style="left:1931px;top:1254px" width="273" height="184" viewBox="0 0 273 184"><rect x="1" y="1" width="271" height="182" rx="6" fill="#fff" stroke="#ddd" stroke-width="2"/><g filter="url(#bl)"><use href="#g5"/>
<path class="b p" d="M53.950 162V52M88.650 162V89M123.350 162V48M158.050 162V56M192.750 162V72M227.450 162V91"/><path class="o p" d="M61.450 162V62M96.150 162V70M130.850 162V21M165.550 162V81M200.250 162V60M234.950 162V85"/>
<g class="yl"><text x="29" y="17">100h</text><text x="29" y="47">80h</text><text x="29" y="76">60h</text><text x="29" y="106">40h</text><text x="29" y="135">20h</text><text x="29" y="165">0h</text></g>
<g class="xl"><text x="58" y="173">运营项目</text><text x="92" y="173">官网项目</text><text x="127" y="173">EPR 项目</text><text x="162" y="173">小程序项目</text><text x="197" y="173">广告项目</text><text x="231" y="173">后台项目</text></g></g></svg>

<!-- footer -->
<div class="a" style="left:636px;top:1434px;width:1608px;height:98px;box-sizing:border-box;border-top:2px solid #ececec;background:#fff;border-radius:0 0 8px 8px"></div>
<div class="a" style="left:1958px;top:1456px;width:115px;height:58px;box-sizing:border-box;border:2px solid #ccc;border-radius:6px;background:#fff"></div>
<div class="t" style="left:1987px;top:1472px;font-size:28px;color:#555">取消</div>
<div class="a" style="left:2089px;top:1456px;width:116px;height:58px;border-radius:6px;background:#3290e8"></div>
<div class="t" style="left:2119px;top:1472px;font-size:28px;color:#fff">添加</div>

</body>
</html>
